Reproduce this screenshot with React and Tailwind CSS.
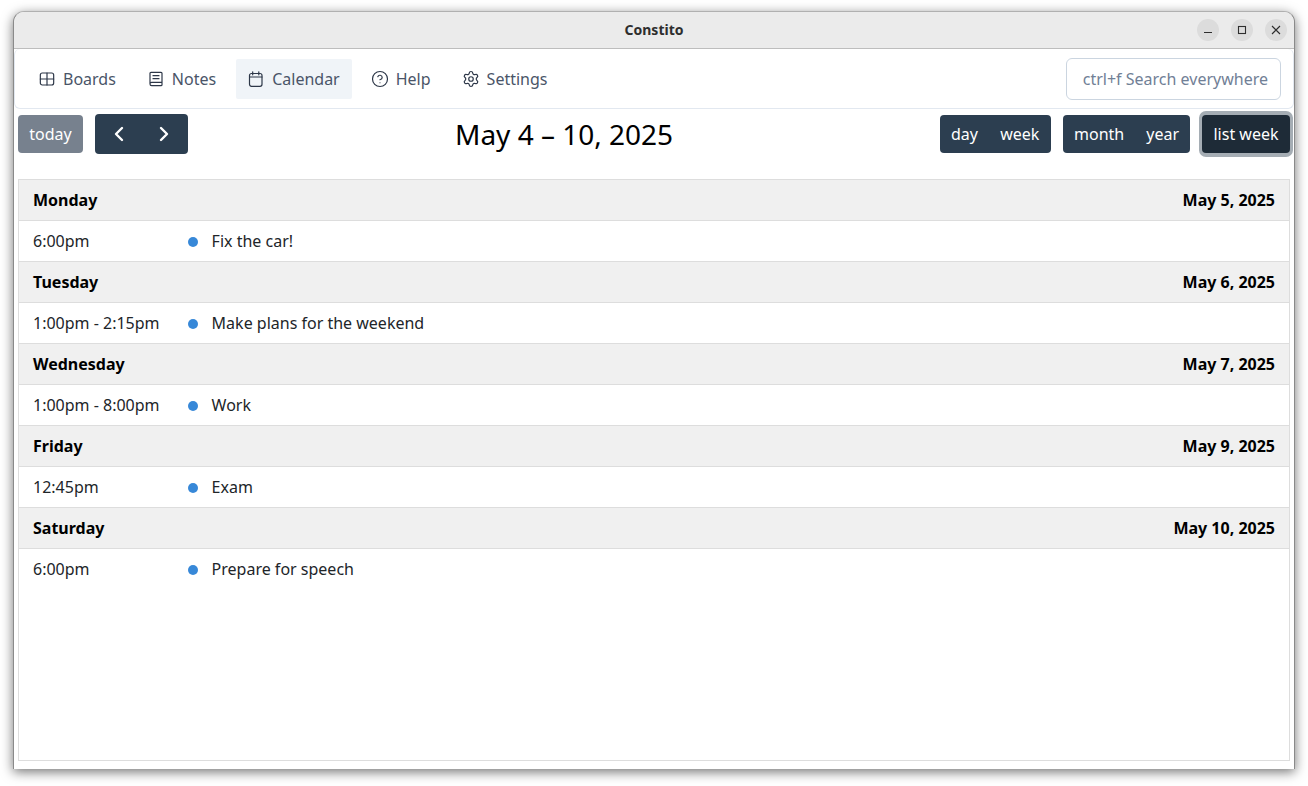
import React from 'react';
import { ChevronLeft, ChevronRight, CircleHelp, Settings } from 'lucide-react';

const Boards = ({ className }) => (
  <svg className={className} viewBox="0 0 24 24" fill="none" stroke="currentColor" strokeWidth="1.8" strokeLinecap="round" strokeLinejoin="round">
    <rect x="2" y="3" width="20" height="18" rx="3" />
    <path d="M2 12h20M12 3v18" />
  </svg>
);

const Notes = ({ className }) => (
  <svg className={className} viewBox="0 0 24 24" fill="none" stroke="currentColor" strokeWidth="1.8" strokeLinecap="round" strokeLinejoin="round">
    <path d="M3 19V3.500A1.500 1.500 0 0 1 4.500 2h15A1.500 1.500 0 0 1 21 3.500v17a1.500 1.500 0 0 1-1.500 1.500H5.500A2.500 2.500 0 0 1 3 19.500A2.500 2.500 0 0 1 5.500 17H21" />
    <path d="M7.500 7h9M7.500 11.500h9" />
  </svg>
);

const CalendarIcon = ({ className }) => (
  <svg className={className} viewBox="0 0 16 16" fill="none" stroke="currentColor" strokeWidth="1.200" strokeLinecap="round" strokeLinejoin="round">
    <rect x="1.500" y="2.500" width="12.500" height="12.800" rx="2" />
    <path d="M1.500 6h12.500M4.700 .8v3M10.800 .8v3" />
  </svg>
);

const navItems = [
  { label: 'Boards', icon: Boards, iconClass: 'h-4 w-4' },
  { label: 'Notes', icon: Notes, iconClass: 'h-4 w-4' },
  { label: 'Calendar', icon: CalendarIcon, iconClass: 'h-4 w-4' },
  { label: 'Help', icon: CircleHelp, iconClass: '-mx-px h-[18px] w-[18px]' },
  { label: 'Settings', icon: Settings, iconClass: '-mx-px h-[18px] w-[18px]' },
];

const days = [
  { day: 'Monday', date: 'May 5, 2025', time: '6:00pm', title: 'Fix the car!' },
  { day: 'Tuesday', date: 'May 6, 2025', time: '1:00pm - 2:15pm', title: 'Make plans for the weekend' },
  { day: 'Wednesday', date: 'May 7, 2025', time: '1:00pm - 8:00pm', title: 'Work' },
  { day: 'Friday', date: 'May 9, 2025', time: '12:45pm', title: 'Exam' },
  { day: 'Saturday', date: 'May 10, 2025', time: '6:00pm', title: 'Prepare for speech' },
];

const WindowButton = ({ children }) => (
  <button className="flex h-[22px] w-[22px] items-center justify-center rounded-full bg-[#dcdcdc] text-[#2e2e2e]">
    <svg className="h-4 w-4" viewBox="0 0 16 16" fill="none" stroke="currentColor" strokeWidth="1.100">
      {children}
    </svg>
  </button>
);

const ToolbarButton = ({ children, className = '' }) => (
  <button className={`flex h-[38px] items-center text-[16px] text-white ${className}`}>
    {children}
  </button>
);

export default function App() {
  return (
    <div className="h-[786px] w-[1308px] overflow-hidden bg-white pl-[13px] pt-[11px] font-['Noto_Sans',sans-serif]">
      <div className="flex h-[758px] w-[1282px] flex-col overflow-hidden rounded-t-[11px] border-x border-t border-x-[#8a8a8a] border-t-[#b0b0b0] bg-white shadow-[0_3px_12px_rgba(0,0,0,0.55)]">
        {/* Title bar */}
        <div className="relative flex h-[37px] shrink-0 items-center justify-center border-b border-[#bdbdbd] bg-[#ebebeb]">
          <span className="-mt-px text-[14px] font-bold text-[#2e2e2e]">Constito</span>
          <div className="absolute right-[7px] top-[7px] flex gap-[12px]">
            <WindowButton>
              <path d="M4 10.500h8" />
            </WindowButton>
            <WindowButton>
              <rect x="4.500" y="4.500" width="7" height="7" />
            </WindowButton>
            <WindowButton>
              <path d="M4 4l8 8M12 4l-8 8" />
            </WindowButton>
          </div>
        </div>

        {/* Navigation */}
        <div className="flex h-[60px] shrink-0 items-center justify-between rounded-[6px] border border-t-0 border-[#e2e8f0] pl-[12px] pr-[12px] pt-px">
          <nav className="flex items-center gap-2">
            {navItems.map(({ label, icon: Icon, iconClass }) => (
              <a
                key={label}
                className={`flex h-[40px] items-center gap-2 rounded-[2px] px-3 text-[16px] text-[#4a5568] ${label === 'Calendar' ? 'bg-[#f0f4f8]' : ''}`}
              >
                <Icon className={`shrink-0 text-[#2d3748] ${iconClass}`} strokeWidth={1.600} />
                {label}
              </a>
            ))}
          </nav>
          <div className="flex h-[42px] w-[215px] items-center justify-end rounded-[6px] border border-[#cbd5e0] pr-[12px] text-[16px] text-[#718096]">
            ctrl+f Search everywhere
          </div>
        </div>

        {/* Calendar toolbar */}
        <div className="relative flex h-[70px] shrink-0 items-start justify-between px-1 pt-[5px]">
          <div className="flex items-start gap-[12px]">
            <ToolbarButton className="mt-px w-[65px] justify-center rounded-[4px] bg-[#77818e]">today</ToolbarButton>
            <div className="flex h-[40px] w-[93px] items-center justify-around rounded-[4px] bg-[#2c3e50] px-[1px] text-white">
              <ChevronLeft className="h-[24px] w-[24px]" strokeWidth={2.400} />
              <ChevronRight className="h-[24px] w-[24px]" strokeWidth={2.400} />
            </div>
          </div>
          <h2 className="absolute left-[441px] top-[6px] text-[28px] leading-[38px] text-black">May 4 – 10, 2025</h2>
          <div className="flex items-start">
            <ToolbarButton className="mt-px w-[111px] justify-between rounded-[4px] bg-[#2c3e50] pl-[11px] pr-[11.600px]">
              <span>day</span>
              <span>week</span>
            </ToolbarButton>
            <ToolbarButton className="ml-[12px] mt-px w-[127px] justify-between rounded-[4px] bg-[#2c3e50] px-[11px]">
              <span>month</span>
              <span>year</span>
            </ToolbarButton>
            <ToolbarButton className="ml-[12px] mt-px w-[88px] justify-center rounded-[4px] bg-[#1e2b37] shadow-[0_1px_0_3px_#a5adb4,0_-1px_0_3px_#a5adb4]">
              list week
            </ToolbarButton>
          </div>
        </div>

        {/* List view */}
        <div className="mx-1 flex h-[582px] flex-col border border-[#dddddd]">
          {days.map((d, i) => (
            <div key={d.day}>
              <div className="flex h-[41px] items-center justify-between border-b border-[#dddddd] bg-[#f0f0f0] px-[14px] text-[16px] font-bold text-black">
                <span>{d.day}</span>
                <span>{d.date}</span>
              </div>
              <div className={`flex h-[41px] items-center border-b px-[14px] text-[16px] text-[#212529] ${i < days.length - 1 ? 'border-[#dddddd]' : 'border-transparent'}`}>
                <span className="w-[155px]">{d.time}</span>
                <span className="mt-px h-[10px] w-[10px] rounded-full bg-[#3788d8]" />
                <span className="ml-[13.600px]">{d.title}</span>
              </div>
            </div>
          ))}
        </div>
      </div>
    </div>
  );
}
